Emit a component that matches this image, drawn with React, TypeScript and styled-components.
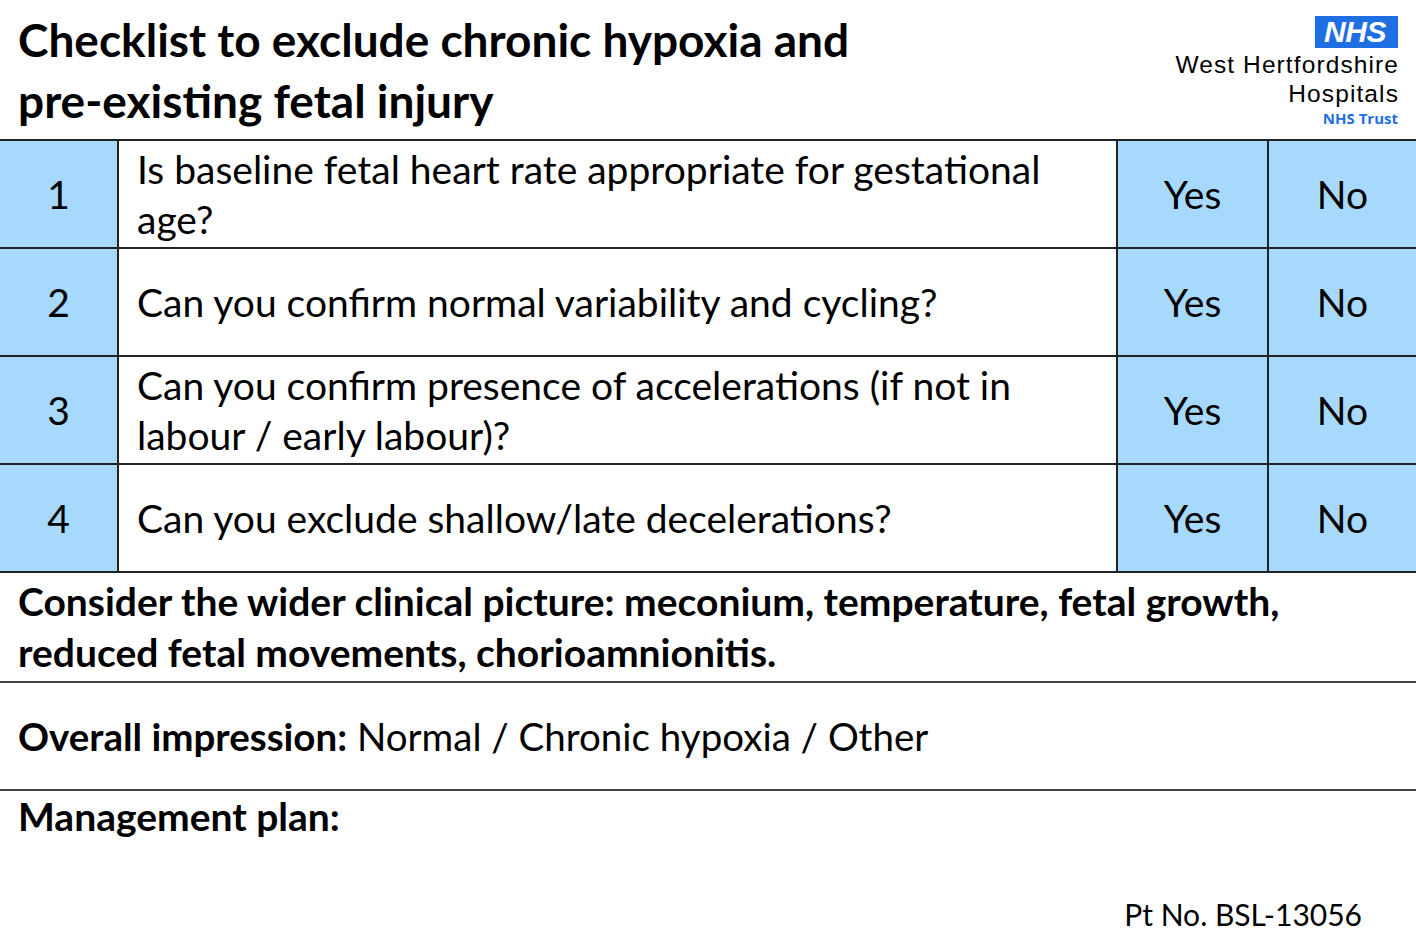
import styled, { createGlobalStyle } from "styled-components";

const GlobalStyle = createGlobalStyle`
  html, body {
    margin: 0;
    padding: 0;
    background: #ffffff;
  }
  body {
    font-family: Lato, "Open Sans", sans-serif;
    color: #000;
  }
`;

const Page = styled.div`
  width: 1416px;
  height: 946px;
  display: flex;
  flex-direction: column;
  overflow: hidden;
`;

const Header = styled.header`
  height: 141px;
  display: flex;
  justify-content: space-between;
  align-items: flex-start;
  box-sizing: border-box;
  border-bottom: 2px solid #222;
`;

const Title = styled.h1`
  margin: 0;
  padding: 9px 0 0 18px;
  font-size: 46px;
  font-weight: 700;
  line-height: 61px;
`;

const Brand = styled.div`
  display: flex;
  flex-direction: column;
  align-items: flex-end;
  padding: 16px 18px 0 0;
  font-family: "Liberation Sans", Arial, sans-serif;
`;

const Lozenge = styled.div`
  width: 83px;
  height: 32px;
  margin-bottom: 2px;
  background: #1f6fe3;
  color: #fff;
  font-style: italic;
  font-weight: 700;
  font-size: 30px;
  line-height: 32px;
  letter-spacing: -0.5px;
  text-align: center;
  box-sizing: border-box;
  padding-right: 3px;
`;

const TrustLine = styled.div`
  font-size: 24.5px;
  line-height: 29px;
  height: 29px;
  text-align: right;
  letter-spacing: 1.1px;
  margin-right: -1px;
`;

const TrustTag = styled.div`
  color: #1f6fe3;
  font-family: "Open Sans", sans-serif;
  font-size: 15px;
  font-weight: 700;
  line-height: 18px;
  margin-top: 1px;
`;

const Grid = styled.div`
  display: grid;
  grid-template-columns: 119px 999px 151px 147px;
  grid-auto-rows: 108px;
`;

const Cell = styled.div<{ $blue?: boolean; $center?: boolean; $last?: boolean }>`
  background: ${(p) => (p.$blue ? "#a7d9fc" : "#fff")};
  border-bottom: 2px solid #222;
  border-right: ${(p) => (p.$last ? "none" : "2px solid #222")};
  box-sizing: border-box;
  display: flex;
  align-items: center;
  justify-content: ${(p) => (p.$center ? "center" : "flex-start")};
  font-size: 39px;
  line-height: 50px;
  padding: ${(p) => (p.$center ? "0" : "0 6px 0 18px")};
`;

const Section = styled.div<{ $h: number }>`
  height: ${(p) => p.$h}px;
  box-sizing: border-box;
  border-bottom: 2px solid #444;
  display: flex;
  align-items: center;
  padding: 0 18px;
  font-size: 39px;
  line-height: 51px;
`;

const Bold = styled.span`
  font-weight: 700;
`;

const Plain = styled.span`
  font-size: 38.5px;
`;

const Footer = styled.div`
  flex: 1;
  display: flex;
  flex-direction: column;
  justify-content: space-between;
  padding: 2px 54px 12px 18px;
  font-size: 39px;
  line-height: 46px;
`;

const PtNo = styled.div`
  align-self: flex-end;
  font-size: 30px;
  line-height: 40px;
`;

const rows = [
  "Is baseline fetal heart rate appropriate for gestational age?",
  "Can you confirm normal variability and cycling?",
  "Can you confirm presence of accelerations (if not in labour / early labour)?",
  "Can you exclude shallow/late decelerations?",
];

export default function App() {
  return (
    <Page>
      <GlobalStyle />
      <Header>
        <Title>
          Checklist to exclude chronic hypoxia and
          <br />
          pre-existing fetal injury
        </Title>
        <Brand>
          <Lozenge>NHS</Lozenge>
          <TrustLine>West Hertfordshire</TrustLine>
          <TrustLine>Hospitals</TrustLine>
          <TrustTag>NHS Trust</TrustTag>
        </Brand>
      </Header>
      <Grid>
        {rows.map((q, i) => (
          <>
            <Cell key={`n${i}`} $blue $center>
              {i + 1}
            </Cell>
            <Cell key={`q${i}`}>{q}</Cell>
            <Cell key={`y${i}`} $blue $center>
              Yes
            </Cell>
            <Cell key={`o${i}`} $blue $center $last>
              No
            </Cell>
          </>
        ))}
      </Grid>
      <Section $h={110}>
        <Bold>
          Consider the wider clinical picture: meconium, temperature, fetal growth,
          <br />
          reduced fetal movements, chorioamnionitis.
        </Bold>
      </Section>
      <Section $h={108}>
        <Plain>
          <Bold>Overall impression:</Bold> Normal / Chronic hypoxia / Other
        </Plain>
      </Section>
      <Footer>
        <Bold>Management plan:</Bold>
        <PtNo>Pt No. BSL-13056</PtNo>
      </Footer>
    </Page>
  );
}
